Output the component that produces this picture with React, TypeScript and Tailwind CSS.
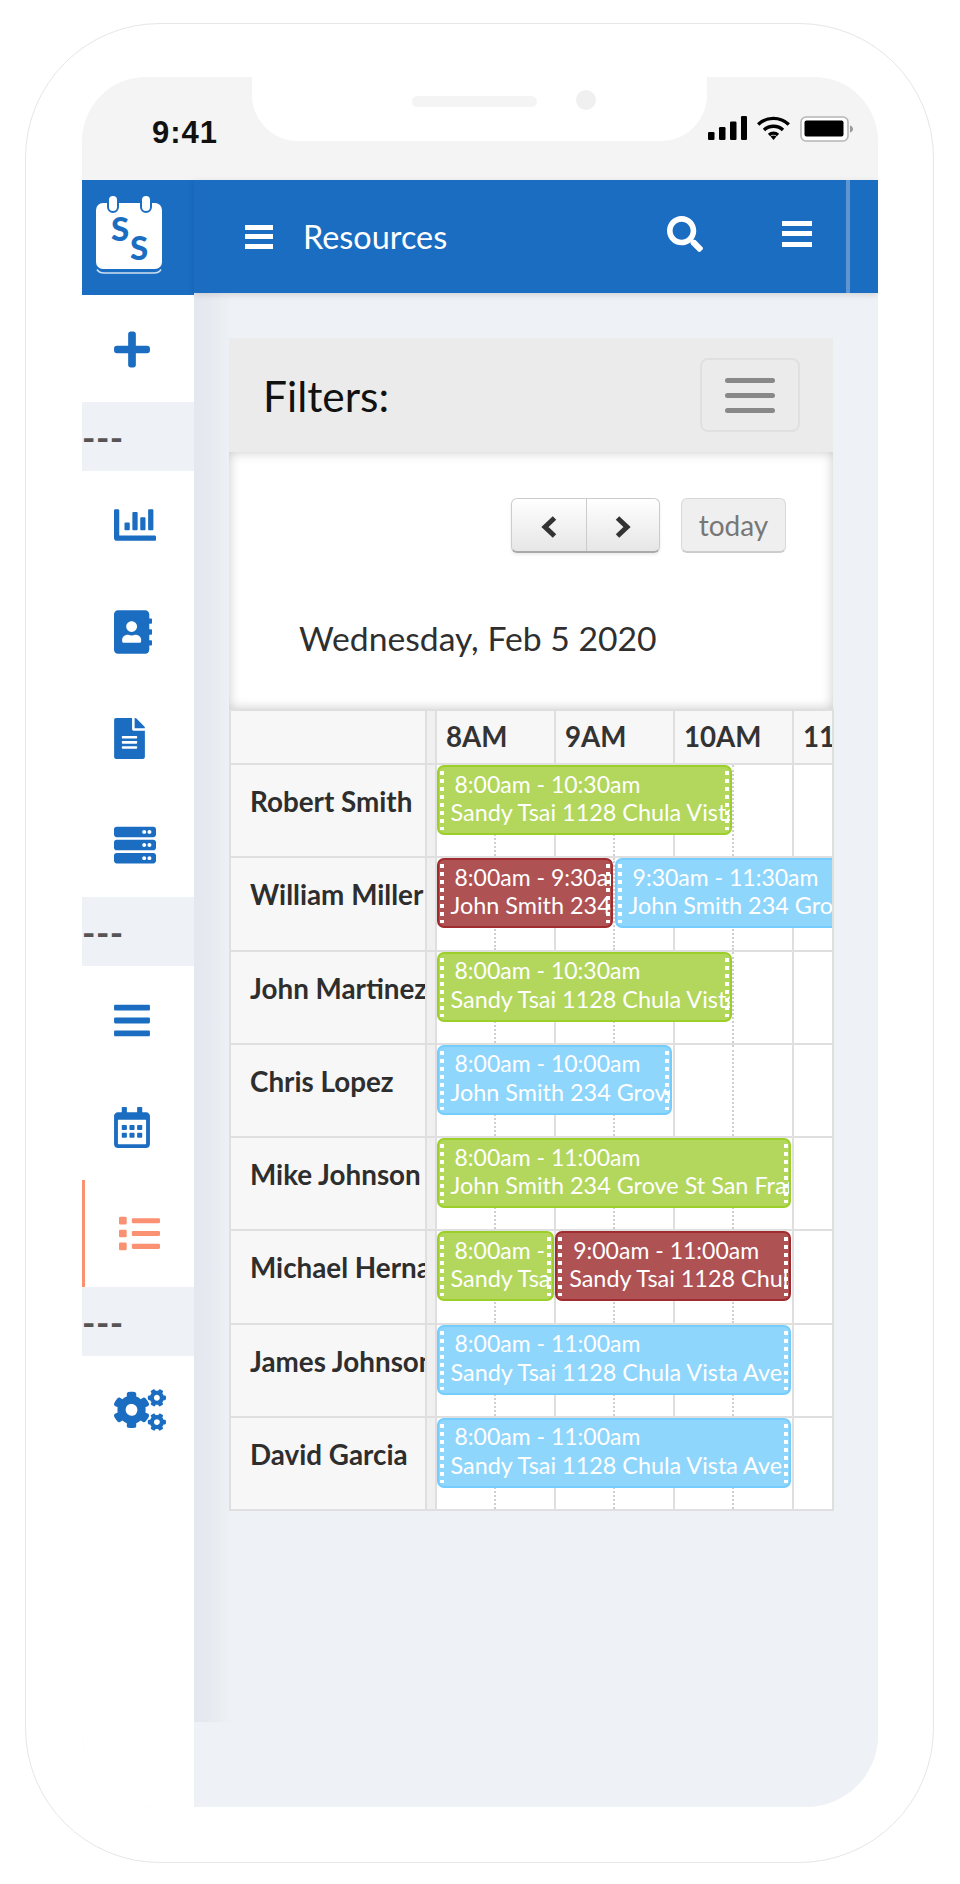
import React from "react";
import {
  FaPlus, FaChartBar, FaAddressBook, FaFileAlt, FaServer, FaBars, FaRegCalendarAlt, FaList, FaCogs, FaSearch,
} from "react-icons/fa";

const HOUR = 118.7;
type Kind = "green" | "red" | "blue";
type Ev = { kind: Kind; start: number; end: number; time: string; text: string };

const KIND: Record<Kind, string> = {
  green: "bg-[#b2d75c] border-[#9ccf2a]",
  red: "bg-[#ae5254] border-[#a02c30]",
  blue: "bg-[#8fd6fd] border-[#74ccff]",
};

const SANDY = "Sandy Tsai 1128 Chula Vista Ave";
const JOHN = "John Smith 234 Grove St San Francisco";

const ROWS: { name: string; events: Ev[] }[] = [
  { name: "Robert Smith", events: [{ kind: "green", start: 0, end: 2.5, time: "8:00am - 10:30am", text: SANDY }] },
  {
    name: "William Miller",
    events: [
      { kind: "red", start: 0, end: 1.5, time: "8:00am - 9:30am", text: JOHN },
      { kind: "blue", start: 1.5, end: 3.5, time: "9:30am - 11:30am", text: JOHN },
    ],
  },
  { name: "John Martinez", events: [{ kind: "green", start: 0, end: 2.5, time: "8:00am - 10:30am", text: SANDY }] },
  { name: "Chris Lopez", events: [{ kind: "blue", start: 0, end: 2, time: "8:00am - 10:00am", text: JOHN }] },
  { name: "Mike Johnson", events: [{ kind: "green", start: 0, end: 3, time: "8:00am - 11:00am", text: JOHN }] },
  {
    name: "Michael Hernandez",
    events: [
      { kind: "green", start: 0, end: 1, time: "8:00am - 9:00am", text: SANDY },
      { kind: "red", start: 1, end: 3, time: "9:00am - 11:00am", text: SANDY },
    ],
  },
  { name: "James Johnson", events: [{ kind: "blue", start: 0, end: 3, time: "8:00am - 11:00am", text: SANDY }] },
  { name: "David Garcia", events: [{ kind: "blue", start: 0, end: 3, time: "8:00am - 11:00am", text: SANDY }] },
];

const HANDLE =
  "absolute top-[4px] bottom-[3px] w-[4px] bg-[repeating-linear-gradient(to_bottom,#fff_0,#fff_4px,transparent_4px,transparent_8px)]";

function Event({ ev }: { ev: Ev }) {
  return (
    <div
      className={`absolute top-0 h-[70px] rounded-[7px] border-2 overflow-hidden text-white text-[23px] leading-[28.5px] whitespace-nowrap ${KIND[ev.kind]}`}
      style={{ left: -0.5 + ev.start * HOUR, width: (ev.end - ev.start) * HOUR - 1.5 }}
    >
      <div className="pl-[16px] pt-[2.5px]">{ev.time}</div>
      <div className="pl-[12px] text-[23.4px]">{ev.text}</div>
      <span className={`${HANDLE} left-[1px]`} />
      <span className={`${HANDLE} right-[1px]`} />
    </div>
  );
}

function HourGrid() {
  return (
    <div className="flex h-full w-[480px]">
      {[0, 1, 2, 3].map((i) => (
        <div key={i} className="w-[119px] shrink-0 h-full flex border-r-2 border-[#dfdfdf]">
          <div className={`w-[59px] h-full ${i < 3 ? "border-r-2 border-dotted border-[#cfcfcf]" : ""}`} />
        </div>
      ))}
    </div>
  );
}

function Row({ name, events }: { name: string; events: Ev[] }) {
  return (
    <div className="flex h-[93.25px] border-b-2 border-[#dfdfdf]">
      <div className="w-[196px] shrink-0 bg-[#f7f7f7] border-r-2 border-[#dfdfdf] overflow-hidden pl-[19px] pt-[22px] text-[27.8px] leading-[30px] font-bold text-[#2e2e2e] whitespace-nowrap">
        {name}
      </div>
      <div className="w-[10px] shrink-0 bg-[#f0f0f0] border-r-2 border-[#dfdfdf]" />
      <div className="relative flex-1 overflow-hidden bg-white">
        <HourGrid />
        {events.map((ev, i) => (
          <Event key={i} ev={ev} />
        ))}
      </div>
    </div>
  );
}

function Divider() {
  return (
    <div className="h-[69px] bg-[#eef1f5] flex items-center text-[36px] leading-none text-[#555] font-bold tracking-[0.5px]">
      ---
    </div>
  );
}

function NavItem({ children, h = "h-[106.5px]", active }: { children: React.ReactNode; h?: string; active?: boolean }) {
  return (
    <div className={`${h} flex items-center pl-[32px] pt-[2px] relative`}>
      {active && <span className="absolute left-0 inset-y-0 w-[3px] bg-[#fb9173]" />}
      {children}
    </div>
  );
}

function Burger({ cls }: { cls: string }) {
  return (
    <div className={`flex flex-col justify-between ${cls}`}>
      <span className="h-[5px] bg-white" />
      <span className="h-[5px] bg-white" />
      <span className="h-[5px] bg-white" />
    </div>
  );
}

function Logo() {
  return (
    <svg width="70" height="82" viewBox="0 0 70 82" className="block">
      <rect x="2" y="8" width="66" height="66" rx="7" fill="#fff" />
      <path d="M3 74.5c2 3 4 3.5 7 3.5h50c3 0 5-.5 7-3.5" fill="none" stroke="#cfe0f2" strokeWidth="1.5" />
      <rect x="14" y="0" width="10" height="17" rx="5" fill="#fff" stroke="#1b6dc1" strokeWidth="2" />
      <rect x="47" y="0" width="10" height="17" rx="5" fill="#fff" stroke="#1b6dc1" strokeWidth="2" />
      <text x="26" y="46" textAnchor="middle" fontFamily="Lato, sans-serif" fontWeight="900" fontSize="33" fill="#1b6dc1">S</text>
      <text x="45" y="65" textAnchor="middle" fontFamily="Lato, sans-serif" fontWeight="900" fontSize="33" fill="#1b6dc1">S</text>
    </svg>
  );
}

function Chevron({ dir }: { dir: "left" | "right" }) {
  return (
    <svg width="18" height="22" viewBox="0 0 18 22" fill="none" stroke="#333" strokeWidth="5" className="mt-[4px]">
      <path d={dir === "left" ? "M14.5 2 5 11l9.5 9" : "M3.5 2 13 11l-9.5 9"} />
    </svg>
  );
}

function StatusIcons() {
  return (
    <div className="flex items-start pl-[1px] pt-[39px] gap-[10px]">
      <svg width="39" height="24" viewBox="0 0 39 24">
        <rect x="0" y="16" width="6.5" height="8" rx="1.2" />
        <rect x="11" y="11" width="6.5" height="13" rx="1.2" />
        <rect x="22" y="5.5" width="6.5" height="18.5" rx="1.2" />
        <rect x="33" y="0" width="6" height="24" rx="1.2" />
      </svg>
      <svg width="33" height="24" viewBox="0 0 33 24" fill="none" stroke="#000" strokeWidth="3.4">
        <path d="M1.2 8.4C9.8.3 23.2.3 31.8 8.4" />
        <path d="M7 14c5.3-5 13.7-5 19 0" />
        <path d="M12 19c2.6-2.3 6.4-2.3 9 0" />
        <path d="M16.5 24l-3-3.6c1.8-1.3 4.2-1.3 6 0z" fill="#000" stroke="none" />
      </svg>
      <svg width="53" height="26" viewBox="0 0 53 26">
        <rect x="1" y="1" width="47" height="24" rx="5" fill="#fff" stroke="#b5b5b5" strokeWidth="1.6" />
        <rect x="4.5" y="4.5" width="39" height="16" rx="2" fill="#000" />
        <path d="M50 9.5c2 .5 3 2 3 3.5s-1 3-3 3.5z" fill="#9a9a9a" />
      </svg>
    </div>
  );
}

export default function App() {
  const blue = "text-[#1b6dc1]";
  return (
    <div className="w-[960px] h-[1884px] bg-white pt-[23px] pl-[25px] font-[Lato,sans-serif]">
      <div className="w-[909px] h-[1840px] border border-[#e6e6e6] rounded-[135px] pt-[53px] pl-[56px]">
        <div className="w-[796px] h-[1730px] rounded-t-[64px] rounded-b-[72px] overflow-hidden bg-[#f4f4f4] flex flex-col">
          <div className="h-[103px] shrink-0 flex">
            <div className="w-[170px] pl-[70px] pt-[38px] font-['Liberation_Sans',sans-serif] font-bold text-[31px] leading-[36px] tracking-[1px] text-[#111]">
              9:41
            </div>
            <div className="w-[455px] h-[64px] bg-white rounded-b-[46px] flex items-start pt-[13px] pl-[160px] gap-[39px]">
              <span className="w-[125px] h-[11px] mt-[6px] rounded-full bg-[#f4f4f4]" />
              <span className="w-[20px] h-[20px] rounded-full bg-[#f0f0f0]" />
            </div>
            <StatusIcons />
          </div>
          <div className="flex-1 flex min-h-0">
            <aside className="w-[112px] shrink-0 bg-white flex flex-col">
              <div className="h-[115px] bg-[#1b6dc1] flex pl-[12px] pt-[15px]">
                <Logo />
              </div>
              <NavItem h="h-[107px]">
                <FaPlus className={`${blue} w-[36px] h-[41px]`} />
              </NavItem>
              <Divider />
              <NavItem>
                <FaChartBar className={`${blue} w-[42px] h-[42px]`} />
              </NavItem>
              <NavItem>
                <FaAddressBook className={`${blue} w-[38px] h-[44px]`} />
              </NavItem>
              <NavItem>
                <FaFileAlt className={`${blue} w-[31px] h-[41px]`} />
              </NavItem>
              <NavItem>
                <FaServer className={`${blue} w-[42px] h-[42px]`} />
              </NavItem>
              <Divider />
              <NavItem h="h-[107px]">
                <FaBars className={`${blue} w-[36px] h-[41px]`} />
              </NavItem>
              <NavItem h="h-[107px]">
                <FaRegCalendarAlt className={`${blue} w-[36px] h-[41px]`} />
              </NavItem>
              <NavItem h="h-[107px]" active>
                <FaList className="text-[#fb9173] w-[41px] h-[41px] ml-[5px] -mt-[2px]" />
              </NavItem>
              <Divider />
              <NavItem h="h-[108px]">
                <FaCogs className={`${blue} w-[52px] h-[42px] -mt-[2px]`} />
              </NavItem>
            </aside>
            <main className="flex-1 min-w-0 flex flex-col bg-[#eef1f5] bg-[linear-gradient(to_right,#e4e8ee_0,#e6eaf0_14px,#eef1f5_38px)] bg-[size:40px_1542px] bg-no-repeat">
              <header className="h-[113px] shrink-0 bg-[#1b6dc1] flex items-center pl-[51px] shadow-[0_2px_6px_rgba(0,0,0,0.12)] text-white">
                <Burger cls="w-[28px] h-[24px]" />
                <span className="ml-[30px] text-[32.4px] leading-none mt-[2px]">Resources</span>
                <FaSearch className="ml-auto w-[36px] h-[36px] -mt-[6px]" />
                <Burger cls="ml-[79px] w-[30px] h-[26px] -mt-[6px]" />
                <span className="ml-[34px] w-[4px] self-stretch bg-[#5f95d0]" />
                <span className="w-[28px]" />
              </header>
              <section className="ml-[35px] mr-[45px] mt-[45px]">
                <div className="h-[114px] bg-[#ebebeb] flex items-center justify-between pl-[34px] pr-[33px]">
                  <span className="text-[42.5px] leading-none text-[#111] mt-[3px]">Filters:</span>
                  <div className="w-[100px] h-[74px] rounded-[8px] border-2 border-[#e0e0e0] flex flex-col items-center justify-center gap-[10px]">
                    <span className="w-[50px] h-[5px] rounded-full bg-[#888]" />
                    <span className="w-[50px] h-[5px] rounded-full bg-[#888]" />
                    <span className="w-[50px] h-[5px] rounded-full bg-[#888]" />
                  </div>
                </div>
                <div className="h-[257px] bg-white shadow-[inset_0_0_12px_rgba(0,0,0,0.22)] pt-[46px]">
                  <div className="flex justify-end pr-[47px]">
                    <div className="flex h-[55px] rounded-[6px] border border-[#ccc] border-b-2 border-b-[#aaa] shadow-[0_2px_3px_rgba(0,0,0,0.08)] bg-[linear-gradient(to_bottom,#fff,#e6e6e6)]">
                      <div className="w-[75px] flex items-center justify-center border-r border-[#ccc]">
                        <Chevron dir="left" />
                      </div>
                      <div className="w-[72px] flex items-center justify-center">
                        <Chevron dir="right" />
                      </div>
                    </div>
                    <div className="ml-[21px] w-[105px] h-[55px] rounded-[6px] border border-[#d8d8d8] border-b-2 border-b-[#ccc] bg-[#efefef] flex items-center justify-center text-[28px] text-[#777]">
                      today
                    </div>
                  </div>
                  <div className="pl-[70px] mt-[65px] text-[33.7px] leading-[40px] text-[#2f2f2f]">
                    Wednesday, Feb 5 2020
                  </div>
                </div>
                <div className="border-l-2 border-t-2 border-r-2 border-[#dfdfdf] bg-white -mr-[1px]">
                  <div className="flex h-[54px] border-b-2 border-[#dfdfdf] font-bold text-[27.7px] text-[#333]">
                    <div className="w-[196px] shrink-0 bg-[#f7f7f7] border-r-2 border-[#dfdfdf]" />
                    <div className="w-[10px] shrink-0 bg-[#f0f0f0] border-r-2 border-[#dfdfdf]" />
                    <div className="flex-1 flex overflow-hidden bg-[#f7f7f7]">
                      {["8AM", "9AM", "10AM", "11AM"].map((t) => (
                        <div key={t} className="w-[119px] shrink-0 border-r-2 border-[#dfdfdf] pl-[9px] flex items-center whitespace-nowrap">
                          {t}
                        </div>
                      ))}
                    </div>
                  </div>
                  {ROWS.map((r) => (
                    <Row key={r.name} name={r.name} events={r.events} />
                  ))}
                </div>
              </section>
            </main>
          </div>
        </div>
      </div>
    </div>
  );
}
